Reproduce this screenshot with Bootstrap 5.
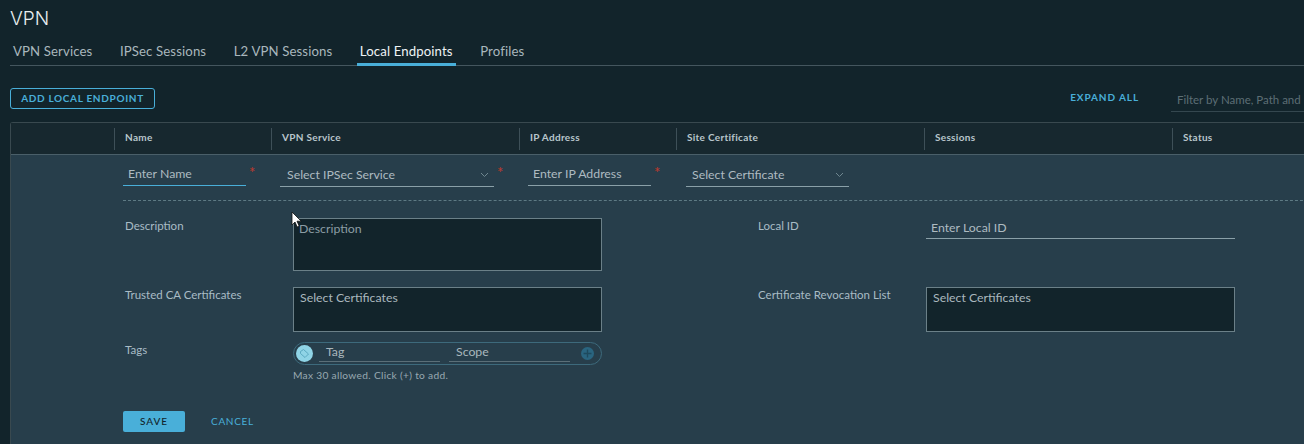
<!doctype html>
<html lang="en">
<head>
<meta charset="utf-8">
<title>VPN</title>
<link href="https://cdn.jsdelivr.net/npm/bootstrap@5.3.0/dist/css/bootstrap.min.css" rel="stylesheet">
<style>
html,body{height:100%;}
body{background:#12242b;color:#c3ccd1;font-family:"Lato","Noto Sans",sans-serif;font-size:12px;overflow:hidden;width:1304px;height:444px;position:relative;}
.shell{padding:8px 0 0 10px;width:1304px;height:444px;overflow:hidden;}
.pg-title{font-size:19px;line-height:22px;color:#e8eef0;margin:0;font-family:"Inter",sans-serif;font-weight:300;}
.vtabs{border-bottom:1px solid #44565e;height:36px;padding-left:0;gap:0;}
.vtab{display:block;height:36px;padding:12px 3px 0;margin-right:21.5px;font-size:13.2px;line-height:18px;color:#a9b7bd;text-decoration:none;letter-spacing:.12px;box-sizing:border-box;white-space:nowrap;}
.vtab.on{color:#eef3f5;border-bottom:3px solid #49afd9;}
.toolbar{height:56px;padding-top:22px;}
.btn-out{width:145px;height:21px;border:1px solid #49afd9;border-radius:3px;background:transparent;color:#49afd9;font-size:10px;font-weight:700;letter-spacing:.68px;line-height:19px;padding:0;text-align:center;}
.expand{color:#49afd9;font-size:10px;font-weight:700;letter-spacing:.9px;margin-left:auto;margin-right:32px;line-height:19px;}
.filter{width:133px;flex:none;border:0;border-bottom:1px solid #34474f;background:transparent;font-size:11.5px;padding:0 0 0 6px;height:24px;line-height:24px;outline:0;}
.filter::placeholder{color:#5d6e75;opacity:1;}
.dtable{width:1320px;border:1px solid #39494f;border-radius:3px 0 0 0;border-right:0;}
.dhead{display:grid;grid-template-columns:103px 157px 248px 157px 248px 248px 150px;height:32px;background:#17282f;border-bottom:1px solid #4a5f69;align-items:center;}
.dhead>div{height:22px;line-height:19px;border-left:1px solid #3e5058;padding-left:10px;font-size:10px;font-weight:700;letter-spacing:.3px;color:#b9c6cc;}
.dhead>div:first-child{border-left:0;}
.dform{background:#273e4b;padding:0 0 12px 112px;height:290px;}
.toprow{height:46px;border-bottom:1px dashed #5e7a84;align-items:flex-start;width:1200px;padding-top:5px;}
.uline{border-bottom:1px solid #8aa0a8;color:#aebbc1;font-size:12.3px;height:26px;line-height:28px;padding-left:5px;box-sizing:border-box;position:relative;display:block;white-space:nowrap;}
.uline.act{border-bottom-color:#49afd9;}
.sel{display:flex;align-items:center;padding-top:2px;line-height:20px;margin-top:1px;padding-left:6px;}
.sel-ipsec{width:214px;padding-left:7px;}
.sel-cert{width:163px;}
.short-in{width:123px;}
.local-in{height:21px;line-height:19px;}
.star{color:#c0392b;font-size:15px;line-height:10px;width:34px;padding:7px 0 0 3px;flex:none;}
.star-wide{width:35px;}
.chev{margin-left:auto;margin-right:5px;}
.fgrid{display:grid;grid-template-columns:170px 309px 154px 170px 309px;margin-top:17px;}
.lbl{font-size:11.5px;color:#a9bcc6;padding-left:2px;line-height:16px;}
.ta{background:#12242b;border:1px solid #6b8088;color:#aab8be;font-size:12.3px;padding:2px 6px;line-height:16px;}
.ta.dim{color:#8c9da4;padding-left:5px;}
.h52{height:53px;}
.h44{height:45px;}
.gaprow{grid-column:1/-1;height:16px;}
.gaprow2{grid-column:1/-1;height:10px;}
.tagpill{height:23px;border:1px solid #3d6a7c;border-radius:12px;padding:0 6px 0 2px;gap:0;}
.tagico{width:17px;height:17px;border-radius:50%;background:#8fd4e6;flex:none;}
.tinput{height:17px;width:121px;border-bottom:1px solid #5b6f78;color:#a9b7bd;font-size:12.3px;line-height:14px;padding-left:7px;margin-left:7px;margin-right:2px;box-sizing:border-box;}
.lead-tag{margin-left:6px;}
.hint{font-size:10.2px;letter-spacing:.3px;color:#98a9b1;margin-top:3px;line-height:14px;white-space:nowrap;}
.actions{margin-top:29px;gap:0;}
.btn-save{width:62px;height:21px;border:0;border-radius:2px;background:#49afd9;color:#12242b;font-size:10px;font-weight:500;letter-spacing:1px;padding:0;line-height:21px;}
.btn-cancel{color:#49afd9;font-size:10px;letter-spacing:.7px;margin-left:26px;line-height:21px;background:transparent;border:0;padding:0;}
.cursor{position:absolute;left:291px;top:211px;}
</style>
</head>
<body>
<div class="shell">
  <h1 class="pg-title">VPN</h1>
  <nav class="vtabs d-flex">
    <a class="vtab" href="#">VPN Services</a>
    <a class="vtab" href="#">IPSec Sessions</a>
    <a class="vtab" href="#">L2 VPN Sessions</a>
    <a class="vtab on" href="#">Local Endpoints</a>
    <a class="vtab" href="#">Profiles</a>
  </nav>
  <div class="toolbar d-flex align-items-start">
    <button class="btn-out" type="button">ADD LOCAL ENDPOINT</button>
    <span class="expand">EXPAND ALL</span>
    <input class="filter" type="text" placeholder="Filter by Name, Path and more">
  </div>
  <div class="dtable">
    <div class="dhead">
      <div></div><div>Name</div><div>VPN Service</div><div>IP Address</div><div>Site Certificate</div><div>Sessions</div><div>Status</div>
    </div>
    <div class="dform">
      <div class="toprow d-flex">
        <span class="uline act short-in">Enter Name</span><span class="star">*</span>
        <span class="uline sel sel-ipsec">Select IPSec Service
          <svg class="chev" width="9" height="6" viewBox="0 0 9 6"><path d="M1 1l3.500 3.500L8 1" fill="none" stroke="#6f8790" stroke-width="1"/></svg></span><span class="star">*</span>
        <span class="uline short-in">Enter IP Address</span><span class="star star-wide">*</span>
        <span class="uline sel sel-cert">Select Certificate
          <svg class="chev" width="9" height="6" viewBox="0 0 9 6"><path d="M1 1l3.500 3.500L8 1" fill="none" stroke="#6f8790" stroke-width="1"/></svg></span>
      </div>
      <div class="fgrid">
        <div class="lbl">Description</div>
        <div class="ta dim h52">Description</div>
        <div></div>
        <div class="lbl">Local ID</div>
        <div><span class="uline local-in">Enter Local ID</span></div>
        <div class="gaprow"></div>
        <div class="lbl">Trusted CA Certificates</div>
        <div class="ta h44">Select Certificates</div>
        <div></div>
        <div class="lbl">Certificate Revocation List</div>
        <div class="ta h44">Select Certificates</div>
        <div class="gaprow2"></div>
        <div class="lbl">Tags</div>
        <div>
          <div class="tagpill d-flex align-items-center">
            <svg class="tagico" viewBox="0 0 17 17"><path d="M4.500 6.500 7.500 4.500l5 4.500-3.500 3.500-4.500-4z" fill="none" stroke="#5aa9c0" stroke-width="1"/></svg>
            <span class="tinput lead-tag">Tag</span>
            <span class="tinput">Scope</span>
            <svg class="ms-auto" width="15" height="15" viewBox="0 0 15 15"><circle cx="7.500" cy="7.500" r="6.500" fill="#2a6580"/><path d="M7.500 3.500v8M3.500 7.500h8" stroke="#1e4a5e" stroke-width="1.400"/></svg>
          </div>
          <div class="hint">Max 30 allowed. Click (+) to add.</div>
        </div>
      </div>
      <div class="actions d-flex">
        <button class="btn-save" type="button">SAVE</button>
        <button class="btn-cancel" type="button">CANCEL</button>
      </div>
    </div>
  </div>
</div>
<svg class="cursor" width="12" height="18" viewBox="0 0 12 18"><path d="M1 1v13l3-3 2.200 5 2-1-2.200-4.800h4.200z" fill="#fff" stroke="#111" stroke-width=".8"/></svg>
<script src="https://cdn.jsdelivr.net/npm/bootstrap@5.3.0/dist/js/bootstrap.bundle.min.js"></script>
</body>
</html>
